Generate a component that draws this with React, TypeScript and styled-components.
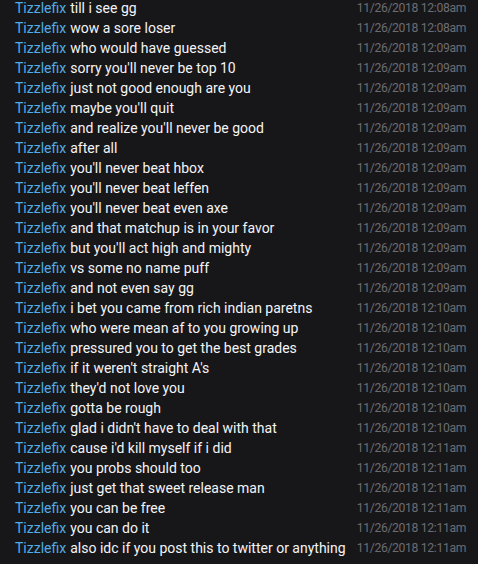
import styled, { createGlobalStyle } from 'styled-components';

const Global = createGlobalStyle`
  html, body {
    margin: 0;
    padding: 0;
    background: #17171a;
  }
`;

const Log = styled.div`
  width: 478px;
  height: 564px;
  overflow: hidden;
  background: #17171a;
  padding-left: 15px;
  padding-right: 12px;
  box-sizing: border-box;
  margin-top: -2px;
  font-family: Roboto, "Liberation Sans", sans-serif;
`;

const Row = styled.div`
  display: flex;
  align-items: center;
  justify-content: space-between;
  height: 20px;
`;

const Message = styled.div`
  font-size: 14px;
  color: #f4f4f6;
  white-space: nowrap;
`;

const Name = styled.span`
  color: #52ade6;
  margin-right: 4px;
`;

const Stamp = styled.div`
  font-size: 12.2px;
  letter-spacing: -0.35px;
  color: #6c6c70;
  white-space: nowrap;
`;

const lines: [string, string][] = [
  ['till i see gg', '12:08am'],
  ['wow a sore loser', '12:08am'],
  ['who would have guessed', '12:09am'],
  ["sorry you'll never be top 10", '12:09am'],
  ['just not good enough are you', '12:09am'],
  ["maybe you'll quit", '12:09am'],
  ["and realize you'll never be good", '12:09am'],
  ['after all', '12:09am'],
  ["you'll never beat hbox", '12:09am'],
  ["you'll never beat leffen", '12:09am'],
  ["you'll never beat even axe", '12:09am'],
  ['and that matchup is in your favor', '12:09am'],
  ["but you'll act high and mighty", '12:09am'],
  ['vs some no name puff', '12:09am'],
  ['and not even say gg', '12:09am'],
  ['i bet you came from rich indian paretns', '12:10am'],
  ['who were mean af to you growing up', '12:10am'],
  ['pressured you to get the best grades', '12:10am'],
  ["if it weren't straight A's", '12:10am'],
  ["they'd not love you", '12:10am'],
  ['gotta be rough', '12:10am'],
  ["glad i didn't have to deal with that", '12:10am'],
  ["cause i'd kill myself if i did", '12:11am'],
  ['you probs should too', '12:11am'],
  ['just get that sweet release man', '12:11am'],
  ['you can be free', '12:11am'],
  ['you can do it', '12:11am'],
  ['also idc if you post this to twitter or anything', '12:11am'],
];

export default function App() {
  return (
    <>
      <Global />
      <Log>
        {lines.map(([text, time], i) => (
          <Row key={i}>
            <Message>
              <Name>Tizzlefix</Name>
              {text}
            </Message>
            <Stamp>11/26/2018 {time}</Stamp>
          </Row>
        ))}
      </Log>
    </>
  );
}
